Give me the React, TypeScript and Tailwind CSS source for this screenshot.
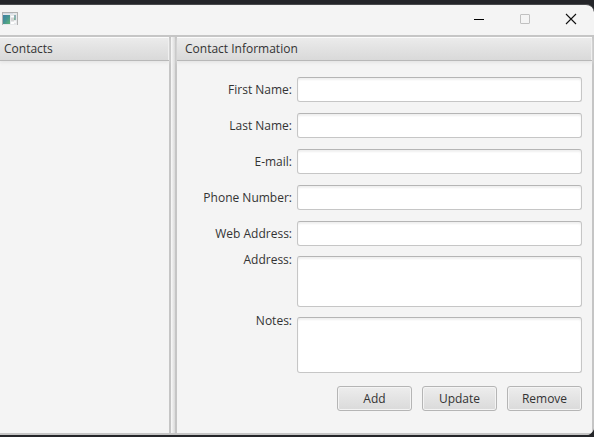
import React from "react";

const fields = [
  { id: "first-name", label: "First Name:", type: "text" },
  { id: "last-name", label: "Last Name:", type: "text" },
  { id: "email", label: "E-mail:", type: "email" },
  { id: "phone", label: "Phone Number:", type: "tel" },
  { id: "web", label: "Web Address:", type: "url" },
];

const areas = [
  { id: "address", label: "Address:", height: "h-[51px]" },
  { id: "notes", label: "Notes:", height: "h-14" },
];

const inputStyle =
  "block min-w-0 flex-1 rounded-[3px] border border-[#c6c6c6] border-t-[#b5b5b5] bg-white px-2 shadow-[inset_0_2px_2px_#f0f0f0] outline-none focus:border-sky-500";

function AppIcon() {
  return (
    <svg width="16" height="14" viewBox="0 0 16 14" aria-hidden="true">
      <defs>
        <linearGradient id="app-pane" x1="0" y1="0" x2="1" y2="1">
          <stop offset="0" stopColor="#3f7fa6" />
          <stop offset="0.5" stopColor="#469592" />
          <stop offset="1" stopColor="#62b676" />
        </linearGradient>
      </defs>
      <rect width="16" height="13" fill="#b1b1b1" />
      <rect x="1" y="1" width="14" height="12" fill="#e6e8ea" />
      <rect x="1" y="1" width="10" height="1" fill="#d2dae4" />
      <rect x="1" y="3" width="7" height="9" fill="url(#app-pane)" />
      <rect x="9" y="4" width="3" height="1" fill="#fff" />
      <rect x="9" y="6" width="3" height="3" fill="#d4d4d4" />
      <rect x="9" y="10" width="3" height="2" fill="#fff" />
      <rect x="12" y="3" width="2" height="5" fill="#8fb0b5" />
      <rect x="12" y="6" width="1" height="2" fill="#79b78e" />
      <rect x="12" y="9" width="2" height="2" fill="#f8f8f8" />
    </svg>
  );
}

function TitleBar() {
  return (
    <header className="flex h-[30px] items-center justify-between pr-[17px] pb-0.5 pl-0.5">
      <AppIcon />
      <div className="flex items-center gap-[34px]">
        <button type="button" aria-label="Minimize" className="flex w-3 justify-center">
          <svg width="12" height="12" viewBox="0 0 12 12">
            <path d="M1 6.5h10" stroke="#000" />
          </svg>
        </button>
        <button type="button" aria-label="Maximize" disabled className="flex w-3 justify-center">
          <svg width="12" height="12" viewBox="0 0 12 12">
            <rect x="1.5" y="1.5" width="9" height="9" rx="0.5" fill="none" stroke="#c0c0c0" />
          </svg>
        </button>
        <button type="button" aria-label="Close" className="flex w-3 justify-center">
          <svg width="12" height="12" viewBox="0 0 12 12">
            <path d="M1 1l10 10M11 1L1 11" stroke="#111" strokeWidth="1.1" />
          </svg>
        </button>
      </div>
    </header>
  );
}

function PaneTitle({ children, className }: { children: React.ReactNode; className: string }) {
  return (
    <h2
      className={`h-6 border-b border-[#b8b8b8] bg-linear-to-b from-[#ececec] to-[#d9d9d9] leading-6 shadow-[inset_0_1px_0_#fbfbfb,inset_-1px_0_0_#f0f0f0,0_2px_3px_#e6e6e6] ${className}`}
    >
      {children}
    </h2>
  );
}

export default function App() {
  return (
    <div className="flex min-h-screen flex-col bg-[#242529] pt-1 pb-0.5 font-['Open_Sans','Noto_Sans',sans-serif] text-[12px] text-[#333]">
      <div className="flex flex-1 flex-col overflow-hidden rounded-r-lg border-t border-[#48494c] bg-[#f4f4f4]">
        <TitleBar />
        <main className="flex flex-1 border-y-2 border-[#c5c5c5]">
          <section className="w-[171px] shrink-0 border-r-2 border-[#c5c5c5]">
            <PaneTitle className="pl-1">Contacts</PaneTitle>
          </section>
          <div className="w-1 shrink-0 bg-linear-to-r from-[#f8f8f8] to-[#dadada]" />
          <section className="min-w-0 flex-1 border-x-2 border-[#c5c5c5]">
            <PaneTitle className="pl-2">Contact Information</PaneTitle>
            <form className="pt-4 pr-2.5 pb-[22px]" onSubmit={(e) => e.preventDefault()}>
              <div className="flex flex-col gap-[11px]">
                {fields.map((f) => (
                  <div key={f.id} className="flex h-[25px] gap-[5px]">
                    <label htmlFor={f.id} className="w-[115px] shrink-0 text-right leading-[25px]">
                      {f.label}
                    </label>
                    <input id={f.id} type={f.type} className={inputStyle} />
                  </div>
                ))}
              </div>
              <div className="mt-2.5 flex flex-col gap-2.5">
                {areas.map((a) => (
                  <div key={a.id} className="flex gap-[5px]">
                    <label htmlFor={a.id} className="w-[115px] shrink-0 text-right leading-2">
                      {a.label}
                    </label>
                    <textarea id={a.id} className={`resize-none ${a.height} ${inputStyle}`} />
                  </div>
                ))}
              </div>
              <div className="mt-[13px] flex justify-end gap-2.5">
                {["Add", "Update", "Remove"].map((name) => (
                  <button
                    key={name}
                    type="button"
                    className="h-[25px] w-[75px] rounded-[3px] border border-[#b5b5b5] bg-linear-to-b from-[#ededed] to-[#dadada] leading-[23px] shadow-[inset_0_0_0_1px_#f4f4f4] active:to-[#cccccc]"
                  >
                    {name}
                  </button>
                ))}
              </div>
            </form>
          </section>
        </main>
      </div>
    </div>
  );
}
